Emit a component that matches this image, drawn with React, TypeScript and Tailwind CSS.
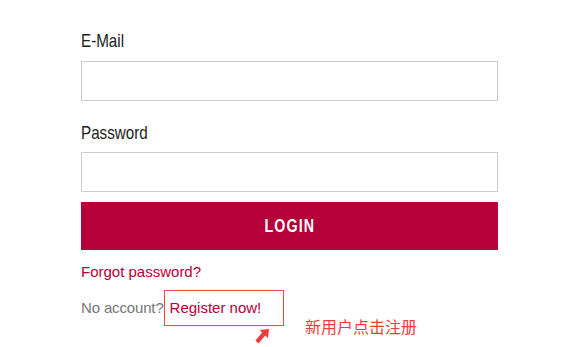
import React from 'react';

export default function App() {
  return (
    <div className="relative w-[583px] h-[347px] bg-white overflow-hidden font-['Liberation_Sans',Arial,sans-serif]">
      <div className="w-[417px] ml-[81px] pt-[29px] flex flex-col">
        {/* E-Mail */}
        <label className="text-[19px] leading-[24px] text-[#222] mb-[8px]">
          <span className="inline-block origin-left scale-x-[0.8]">E-Mail</span>
        </label>
        <input className="h-[40px] w-full border border-[#cccccc] outline-none px-3" />

        {/* Password */}
        <label className="text-[19px] leading-[24px] text-[#222] mt-[20px] mb-[7px]">
          <span className="inline-block origin-left scale-x-[0.8]">Password</span>
        </label>
        <input type="password" className="h-[40px] w-full border border-[#cccccc] outline-none px-3" />

        <button className="mt-[10px] h-[48px] w-full bg-[#b5003a] text-white font-bold text-[19px]">
          <span className="inline-block scale-x-[0.75] tracking-[1.5px]">LOGIN</span>
        </button>

        <a className="mt-[12px] text-[15px] leading-[20px] text-[#b5003a] self-start">Forgot password?</a>

        <div className="mt-[8px] flex items-center text-[15px] leading-[20px]">
          <span className="text-[#777] tracking-[-0.15px]">No account?</span>
          <span className="ml-[0px] h-[36px] w-[120px] pl-[5px] flex items-center border border-[#f24545] text-[#b5003a]">
            Register now!
          </span>
        </div>
      </div>

      {/* annotation */}
      <svg className="absolute left-[254px] top-[328px]" width="17" height="17" viewBox="0 0 17 17">
        <path d="M15 1 L14 10 L11.2 7.4 L4.5 15.5 L1.5 12.5 L8.2 4.6 L5.5 2 Z" fill="#f33a3a" />
      </svg>
      <span className="absolute left-[305px] top-[316px] text-[16px] leading-[20px] text-[#f33a3a] font-['Noto_Sans_CJK_SC',sans-serif]">
        新用户点击注册
      </span>
    </div>
  );
}
